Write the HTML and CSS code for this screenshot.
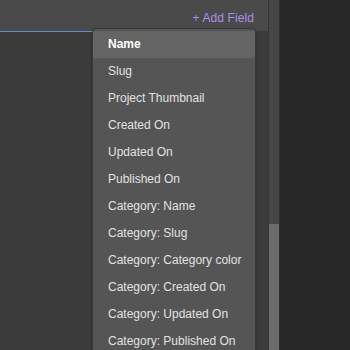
FILE: index.html
```html
<!DOCTYPE html>
<html lang="en">
<head>
  <meta charset="UTF-8" />
  <title>Fields</title>
  <link rel="stylesheet" href="styles.css">
</head>
<body>
  <div class="editor">
    <div class="panel">
      <div class="panel-head">
        <a class="add-field">+ Add Field</a>
      </div>
      <div class="panel-input"></div>
      <div class="panel-body"></div>

      <!-- field picker dropdown -->
      <ul class="dropdown">
        <li class="active">Name</li>
        <li>Slug</li>
        <li>Project Thumbnail</li>
        <li>Created On</li>
        <li>Updated On</li>
        <li>Published On</li>
        <li>Category: Name</li>
        <li>Category: Slug</li>
        <li>Category: Category color</li>
        <li>Category: Created On</li>
        <li>Category: Updated On</li>
        <li>Category: Published On</li>
      </ul>
    </div>
    <div class="scrollbar"><div class="thumb"></div></div>
    <div class="canvas"></div>
  </div>
</body>
</html>
```

FILE: styles.css
```css
body {
  margin: 0;
  width: 350px;
  height: 350px;
  overflow: hidden;
  background: #282828;
  font-family: "Liberation Sans", Arial, sans-serif;
  font-size: 12px;
}

.editor {
  display: flex;
  height: 350px;
}

.panel {
  position: relative;
  width: 268px;
  display: flex;
  flex-direction: column;
  background: #3c3c3c;
  border-right: 1px solid #353535;
}

.panel-head {
  height: 31px;
  display: flex;
  justify-content: flex-end;
  align-items: center;
  padding-right: 14px;
  padding-top: 4px;
  box-sizing: border-box;
  background: #4a4a4a;
}

.add-field {
  color: #a890e8;
  letter-spacing: 0.1px;
}

.panel-input {
  width: 110px;
  height: 1px;
  background: #5a8fd6;
}

.panel-body {
  flex: 1;
  background: #3b3b3b;
}

.scrollbar {
  width: 10px;
  display: flex;
  flex-direction: column;
  justify-content: flex-end;
  background: #474747;
  border-right: 1px solid #2f2f2f;
}

.thumb {
  height: 126px;
  background: #6c6c6c;
}

.canvas {
  flex: 1;
  background: #282828;
}

.dropdown {
  position: absolute;
  left: 92px;
  top: 28px;
  width: 162px;
  height: 330px;
  margin: 0;
  padding: 2px 0 0;
  list-style: none;
  background: #555555;
  border: 1px solid #383838;
  border-radius: 4px;
  box-shadow: 0 1px 3px rgba(0, 0, 0, 0.3);
}

.dropdown li {
  height: 27px;
  line-height: 27px;
  padding-left: 15px;
  color: #e2e2e2;
  white-space: nowrap;
}

.dropdown li.active {
  background: #646464;
  color: #ffffff;
  font-weight: bold;
}
```
